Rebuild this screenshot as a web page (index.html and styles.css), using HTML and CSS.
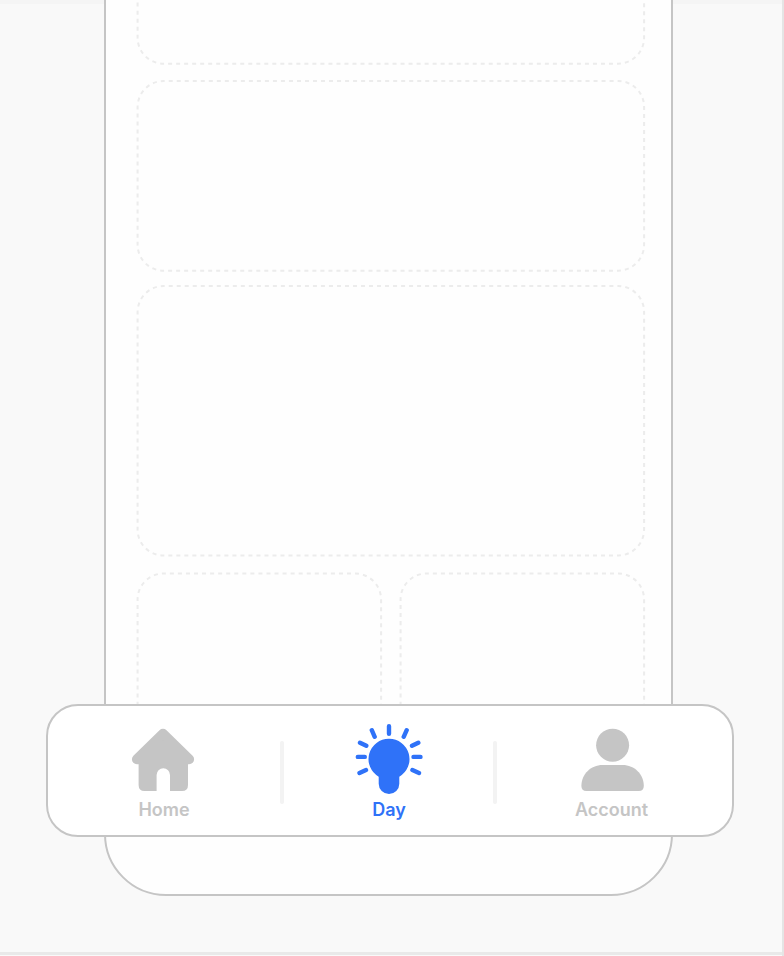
FILE: index.html
```
<!DOCTYPE html>
<html lang="en">
<head>
<meta charset="utf-8">
<title>Day</title>
<link rel="stylesheet" href="styles.css">
</head>
<body>
<main class="canvas">
  <div class="phone">
    <div class="card card-first"><svg class="outline"><rect class="dash" x=".6" y="1" width="506.5" height="189.7" rx="26" pathLength="1344"/></svg></div>
    <div class="card card-medium"><svg class="outline"><rect class="dash" x=".6" y="1" width="506.5" height="189.7" rx="26" pathLength="1344"/></svg></div>
    <div class="card card-large"><svg class="outline"><rect class="dash" x=".6" y="1" width="506.5" height="269.5" rx="26" pathLength="1504"/></svg></div>
    <div class="row">
      <div class="card"><svg class="outline"><rect class="dash dash-small" x=".6" y="1.5" width="243.5" height="190" rx="26" pathLength="816"/></svg></div>
      <div class="card"><svg class="outline"><rect class="dash dash-small" x=".6" y="1.5" width="243.5" height="190" rx="26" pathLength="816"/></svg></div>
    </div>
  </div>
  <nav class="tabbar">
    <a class="tab">
      <svg class="icon" viewBox="0 -.5 70 72">
        <path class="roof" d="M8.9 34.8L35 9.2L61.1 34.8Z"/>
        <path d="M10.6 37H60V60.5Q60 66.5 54 66.5H42V50.5A6.7 6.7 0 0 0 28.6 50.5V66.5H16.6Q10.6 66.5 10.6 60.5Z"/>
      </svg>
      <span class="label-home">Home</span>
    </a>
    <i class="divider"></i>
    <a class="tab tab-active">
      <svg class="icon" viewBox="0 -.5 70 72">
        <path d="M35 14.3A20.3 20.3 0 0 1 45.3 52.2V59.3A10.3 10.3 0 0 1 24.7 59.3V52.2A20.3 20.3 0 0 1 35 14.3Z"/>
        <path class="rays" d="M35 1.8V9.2M17.8 5.7L20.7 12.3M52.7 5.7L49.7 12.3M6 18.2L12.3 21.2M64.3 18.2L58 21.2M3.8 32.4H10.8M59.5 32.4H66.5M5.5 48.5L12 45.6M65 48.5L58.4 45.6"/>
      </svg>
      <span>Day</span>
    </a>
    <i class="divider"></i>
    <a class="tab">
      <svg class="icon" viewBox="-.6 -.5 70 72"><circle cx="35" cy="20.7" r="16.5"/><path d="M25 40.6H45C57 40.6 66.2 50 66.2 61.5Q66.2 66.5 61.2 66.5H8.8Q3.8 66.5 3.8 61.5C3.8 50 13 40.6 25 40.6Z"/></svg>
      <span>Account</span>
    </a>
  </nav>
</main>
</body>
</html>
```
FILE: styles.css
```
* { box-sizing: border-box; }
body { margin: 0; font-family: Inter, "Liberation Sans", sans-serif; }
.canvas {
  display: flow-root;
  width: 784px;
  height: 956px;
  overflow: hidden;
  border-right: 2px solid #e5e5e5;
  background:
    linear-gradient(#f5f5f5, #f5f5f5) 0 0 / 100% 4px no-repeat,
    linear-gradient(#e9e9e9, #e9e9e9) 0 952px / 100% 3px no-repeat,
    #f9f9f9;
}
.phone {
  width: 569px;
  height: 1025px;
  margin: -129px 0 0 104.4px;
  padding: 0 27px 0 30.2px;
  border: 2px solid #c5c5c5;
  border-radius: 62px;
  background: #fefefe;
}
.card { flex: 1; height: 192px; }
.outline { display: block; width: 100%; height: 100%; overflow: visible; }
.dash { fill: none; stroke: #ececec; stroke-width: 2; stroke-dasharray: 4 4; stroke-dashoffset: 2.9; }
.dash-small { stroke-dashoffset: 1.8; }
.card-first { height: 191.7px; margin-bottom: 15.3px; }
.card-medium { height: 191.7px; margin-bottom: 13.3px; }
.card-large { height: 271.5px; margin-bottom: 16px; }
.row { display: flex; gap: 18.3px; width: 508.5px; }
.tabbar {
  position: relative;
  display: flex;
  align-items: flex-start;
  width: 688px;
  height: 133px;
  margin: -192px 0 0 46px;
  padding: 18px 0 0 70px;
  border: 2px solid #c5c5c5;
  border-radius: 32px;
  background: #fff;
}
.tab {
  display: flex;
  flex-direction: column;
  align-items: center;
  width: 90px;
  color: #c5c5c5;
  font-size: 18px;
  font-weight: 600;
  line-height: 24px;
}
.tab-active { color: #2f72f8; }
.label-home { padding-left: 2px; }
.icon { width: 70px; height: 72px; margin-bottom: 2px; fill: currentColor; }
.roof { stroke: currentColor; stroke-width: 10; stroke-linejoin: round; }
.rays { fill: none; stroke: currentColor; stroke-width: 4.4; stroke-linecap: round; }
.divider { width: 4px; height: 63px; margin: 17px 60px 0 72px; border-radius: 2px; background: #f3f3f3; }
.tab-active + .divider { margin-left: 59px; margin-right: 69.5px; }
```
